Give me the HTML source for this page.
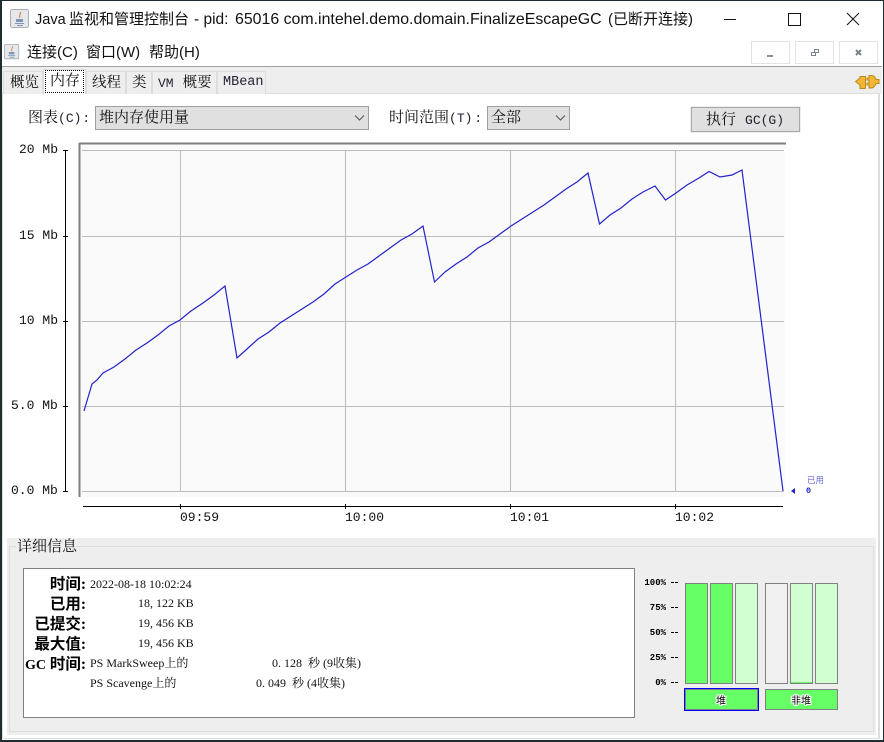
<!DOCTYPE html>
<html><head><meta charset="utf-8"><style>
html,body{margin:0;padding:0;width:884px;height:742px;overflow:hidden;background:#fff}
div,span{position:absolute;white-space:pre;box-sizing:border-box}
span.i{position:static}
.ui{font-family:"Liberation Sans","Noto Sans CJK SC",sans-serif;font-size:15px;color:#111;line-height:18px}
.m{font-family:"Liberation Mono","Noto Serif CJK SC",monospace;font-size:13px;color:#111;line-height:16px}
.c{font-family:"Liberation Mono","Noto Serif CJK SC",monospace;font-size:15px;color:#111;line-height:18px}
.c .l{position:static;font-size:13px;color:#223}
.s{font-family:"Liberation Serif","Noto Serif CJK SC",serif;font-size:12px;color:#111;line-height:16px}
.b{font-family:"Liberation Serif","Noto Sans CJK SC",serif;font-size:15.5px;font-weight:bold;color:#000;line-height:18px;text-align:right}
.b .g{position:static;font-size:14px}
.tab{top:71px;height:23px;background:#eee;border:1px solid #ddd;border-bottom:none}
.wb{top:41px;width:39px;height:23px;border:1px solid #e3e3e3;background:#fff}
</style></head><body>
<div style="left:0;top:0;width:884px;height:742px;border:1px solid #1f2d33;border-width:1px 1px 2px 2px"></div>

<svg style="position:absolute;left:10px;top:9px" width="20" height="20" viewBox="0 0 20 20"><rect x=".5" y=".5" width="18" height="18" rx="2" fill="#e6e8ec" stroke="#a4adb8"/><path d="M10 3c2 2-2 3 0 6" stroke="#d98a50" stroke-width="1.2" fill="none"/><path d="M6 10h7v3H6z" fill="#7f97b3"/><path d="M5 14.500h9M7 16.500h6" stroke="#7f97b3" fill="none"/></svg>
<div class="ui" style="left:35px;top:11px;font-size:14.5px">Java</div>
<div class="ui" style="left:69px;top:11px">监视和管理控制台</div>
<div class="ui" style="left:194px;top:11px;font-size:15.5px">- pid:</div>
<div class="ui" style="left:235px;top:11px;font-size:15.9px">65016 com.intehel.demo.domain.FinalizeEscapeGC</div>
<div class="ui" style="left:608px;top:11px">(已断开连接)</div>
<svg style="position:absolute;left:724px;top:10px" width="150" height="20" fill="none" stroke="#111"><path d="M0 9.500h12M64.500 3.500h12v12h-12zM123 3l12 12M135 3l-12 12"/></svg>

<svg style="position:absolute;left:4px;top:44px" width="16" height="16" viewBox="0 0 20 20"><rect x=".5" y=".5" width="18" height="18" rx="2" fill="#e6e8ec" stroke="#a4adb8"/><path d="M10 3c2 2-2 3 0 6" stroke="#d98a50" stroke-width="1.2" fill="none"/><path d="M6 10h7v3H6z" fill="#7f97b3"/><path d="M5 14.500h9M7 16.500h6" stroke="#7f97b3" fill="none"/></svg>
<div class="ui" style="left:27px;top:44px">连接(C)</div>
<div class="ui" style="left:86px;top:44px">窗口(W)</div>
<div class="ui" style="left:149px;top:44px">帮助(H)</div>
<div class="wb" style="left:751px"></div><div class="wb" style="left:795px"></div><div class="wb" style="left:839px"></div>
<div style="left:767px;top:55px;width:6px;height:2px;background:#8a939c"></div>
<svg style="position:absolute;left:811px;top:49px" width="9" height="8" fill="none" stroke="#7a838c"><path d="M3.500.5h4v3h-4zM.5 3.500h4v3h-4z"/></svg>
<svg style="position:absolute;left:855px;top:49px" width="8" height="8" fill="none" stroke="#7a838c" stroke-width="2"><path d="M1 1l5 5M6 1l-5 5"/></svg>

<div style="left:2px;top:66px;width:880px;height:1px;background:#a0a0a0"></div>
<div style="left:2px;top:67px;width:880px;height:27px;background:#eee"></div>
<div style="left:2px;top:93px;width:878px;height:1px;background:#ddd"></div>
<div style="left:878px;top:93px;width:2px;height:646px;background:#ddd"></div>
<div style="left:2px;top:93px;width:1px;height:646px;background:#ddd"></div>
<div style="left:2px;top:738px;width:878px;height:1px;background:#ddd"></div>
<div class="tab" style="left:3px;width:40px"></div>
<div class="tab" style="left:43px;top:69px;width:43px;height:25px;background:#fff"></div>
<div style="left:45px;top:70px;width:39px;height:23px;border:1px dotted #000"></div>
<div class="tab" style="left:86px;width:40px"></div>
<div class="tab" style="left:126px;width:26px"></div>
<div class="tab" style="left:152px;width:65px"></div>
<div class="tab" style="left:217px;width:49px"></div>
<div class="c" style="left:10px;top:75px;font-size:14.5px">概览</div>
<div class="c" style="left:50px;top:73px">内存</div>
<div class="c" style="left:92px;top:75px;font-size:14.5px">线程</div>
<div class="c" style="left:132px;top:75px;font-size:14.5px">类</div>
<div class="c" style="left:158px;top:75px"><span class="l">VM</span> <span class="i" style="font-size:14.5px">概要</span></div>
<div class="c" style="left:223px;top:74px;font-size:13.5px;color:#223">MBean</div>
<svg style="position:absolute;left:854px;top:74px" width="26" height="16" fill="#f2b632" stroke="#b98a20"><path d="M1.500 7.500L6 4V2.500h5.500v12H6V11z"/><path d="M15 1.500h3Q21 2 22 5.500h3v4h-3Q21 13 18 14h-3v-3h-2V9h2V6h-2V4h2z"/></svg>

<div class="c" style="left:28px;top:110px">图表<span class="l">(C)</span><span class="l" style="margin-left:1px">:</span></div>
<div style="left:95px;top:106px;width:274px;height:24px;background:#e0e0e0;border:1px solid #a0a0a0"></div>
<div class="c" style="left:99px;top:110px">堆内存使用量</div>
<svg style="position:absolute;left:354px;top:114px" width="12" height="8" fill="none" stroke="#555"><path d="M1 1.500l4.500 4.500 4.500-4.500"/></svg>
<div class="c" style="left:389px;top:110px">时间范围<span class="l">(T)</span><span class="l" style="margin-left:2px">:</span></div>
<div style="left:487px;top:106px;width:83px;height:24px;background:#e0e0e0;border:1px solid #a0a0a0"></div>
<div class="c" style="left:491px;top:110px">全部</div>
<svg style="position:absolute;left:555px;top:114px" width="12" height="8" fill="none" stroke="#555"><path d="M1 1.500l4.500 4.500 4.500-4.500"/></svg>
<div style="left:691px;top:107px;width:109px;height:25px;background:#e0e0e0;border:1px solid #a8a8a8;outline:1px solid #eee"></div>
<div class="c" style="left:706px;top:112px">执行 <span class="l">GC(G)</span></div>

<svg style="position:absolute;left:0;top:0" width="884" height="742">
<rect x="80" y="144" width="705" height="353" fill="#fafafa"/>
<path d="M79 143.500H786M79.500 143V497" stroke="#808080" stroke-width="2" fill="none"/>
<path d="M82 150.500H784M82 236.500H784M82 321.500H784M82 406.500H784M82 491.500H784M180.500 150V491M345.500 150V491M510.500 150V491M675.500 150V491" stroke="#bcbcbc" fill="none"/>
<polyline fill="none" stroke="#2222cc" stroke-width="1.200" points="84,411 92,384 97,380 103,373 114,367 125,359 136,350 147,343 158,335 169,326 180,320 191,311 203,303 214,295 225,286 237,358 247,349 258,339 269,332 280,323 291,316 302,309 313,302 324,294 335,284 346,277 357,270 368,264 379,256 390,248 401,240 412,234 423,226 434.5,282 445,272 456,264 467,257 478,248 489,242 500,234 511,226 522,219 533,212 544,205 555,197 566,189 577,182 588,173 599.5,224 610,215 621,208 632,199 643,192 655,186 665.5,200 676,193 687,185 699,178 709,171.5 720,177 732,175 742,170 783,491"/>
<path d="M65.500 150V491.500M63 150.500H68M63 236.500H68M63 321.500H68M63 406.500H68M63 491.500H68M83 506.500H783M180.500 504V509M345.500 504V509M510.500 504V509M675.500 504V509" stroke="#000" fill="none"/>
<path d="M791 491l4-3v6z" fill="#2222cc"/>
</svg>
<div class="m" style="left:19px;top:142px">20 Mb</div>
<div class="m" style="left:19px;top:228px">15 Mb</div>
<div class="m" style="left:19px;top:313px">10 Mb</div>
<div class="m" style="left:11px;top:398px">5.0 Mb</div>
<div class="m" style="left:11px;top:483px">0.0 Mb</div>
<div class="m" style="left:180px;top:510px">09:59</div>
<div class="m" style="left:345px;top:510px">10:00</div>
<div class="m" style="left:510px;top:510px">10:01</div>
<div class="m" style="left:675px;top:510px">10:02</div>
<div style="left:807px;top:475px;font:8.5px/11px 'Liberation Sans','Noto Sans CJK SC',sans-serif;color:#6a6ad8">已用</div>
<div style="left:806px;top:486px;font:bold 8.5px/11px 'Liberation Mono',monospace;color:#2222cc">0</div>

<div style="left:7px;top:538px;width:869px;height:197px;background:#eee"></div>
<div style="left:9px;top:546px;width:865px;height:186px;border:1px solid #ddd"></div>
<div class="c" style="left:16px;top:538px;width:60px;background:#eee;padding-left:1px;height:20px;padding-top:1px">详细信息</div>
<div style="left:23px;top:568px;width:612px;height:150px;background:#fff;border:1px solid #808080"></div>
<div class="b" style="left:20px;top:576px;width:66px">时间:</div>
<div class="b" style="left:20px;top:596px;width:66px">已用:</div>
<div class="b" style="left:20px;top:616px;width:66px">已提交:</div>
<div class="b" style="left:20px;top:636px;width:66px">最大值:</div>
<div class="b" style="left:20px;top:656px;width:66px"><span class="g">GC</span> 时间:</div>
<div class="s" style="left:90px;top:576px">2022-08-18 10:02:24</div>
<div class="s" style="left:138px;top:595px">18, 122 KB</div>
<div class="s" style="left:138px;top:615px">19, 456 KB</div>
<div class="s" style="left:138px;top:635px">19, 456 KB</div>
<div class="s" style="left:90px;top:655px">PS MarkSweep上的</div>
<div class="s" style="left:272px;top:655px">0. 128 &nbsp;秒 (9收集)</div>
<div class="s" style="left:90px;top:675px">PS Scavenge上的</div>
<div class="s" style="left:256px;top:675px">0. 049 &nbsp;秒 (4收集)</div>

<svg style="position:absolute;left:630px;top:535px" width="254" height="207">
<g fill="#000" font-family="'Liberation Mono',monospace" font-size="9" font-weight="bold" text-anchor="end">
<text x="36" y="50">100%</text><text x="36" y="75">75%</text><text x="36" y="100">50%</text><text x="36" y="125">25%</text><text x="36" y="150">0%</text></g>
<path d="M41 47.500h8M41 72.500h8M41 97.500h8M41 122.500h8M41 147.500h8" stroke="#000" stroke-dasharray="3 1" fill="none"/>
<g stroke="#808080">
<rect x="55.500" y="48.500" width="22" height="100" fill="#66ff66"/>
<rect x="80.500" y="48.500" width="22" height="100" fill="#66ff66"/>
<rect x="105.500" y="48.500" width="22" height="100" fill="#d2ffd2"/>
<rect x="135.500" y="48.500" width="22" height="100" fill="#f0f0f0"/>
<rect x="160.500" y="48.500" width="22" height="100" fill="#d2ffd2"/>
<rect x="185.500" y="48.500" width="22" height="100" fill="#d2ffd2"/>
</g>
<rect x="161" y="147" width="21" height="1" fill="#66ff66"/>
<rect x="54.500" y="153.500" width="74" height="22" fill="none" stroke="#0000ff"/>
<rect x="55.500" y="154.500" width="72" height="20" fill="#66ff66" stroke="#808080"/>
<rect x="135.500" y="154.500" width="72" height="20" fill="#66ff66" stroke="#808080"/>
<g font-family="'Noto Sans CJK SC',sans-serif" font-size="10" text-anchor="middle" fill="#000" stroke="#fff" stroke-width="2" paint-order="stroke">
<text x="91" y="169">堆</text><text x="171" y="169">非堆</text></g>
</svg>
</body></html>
